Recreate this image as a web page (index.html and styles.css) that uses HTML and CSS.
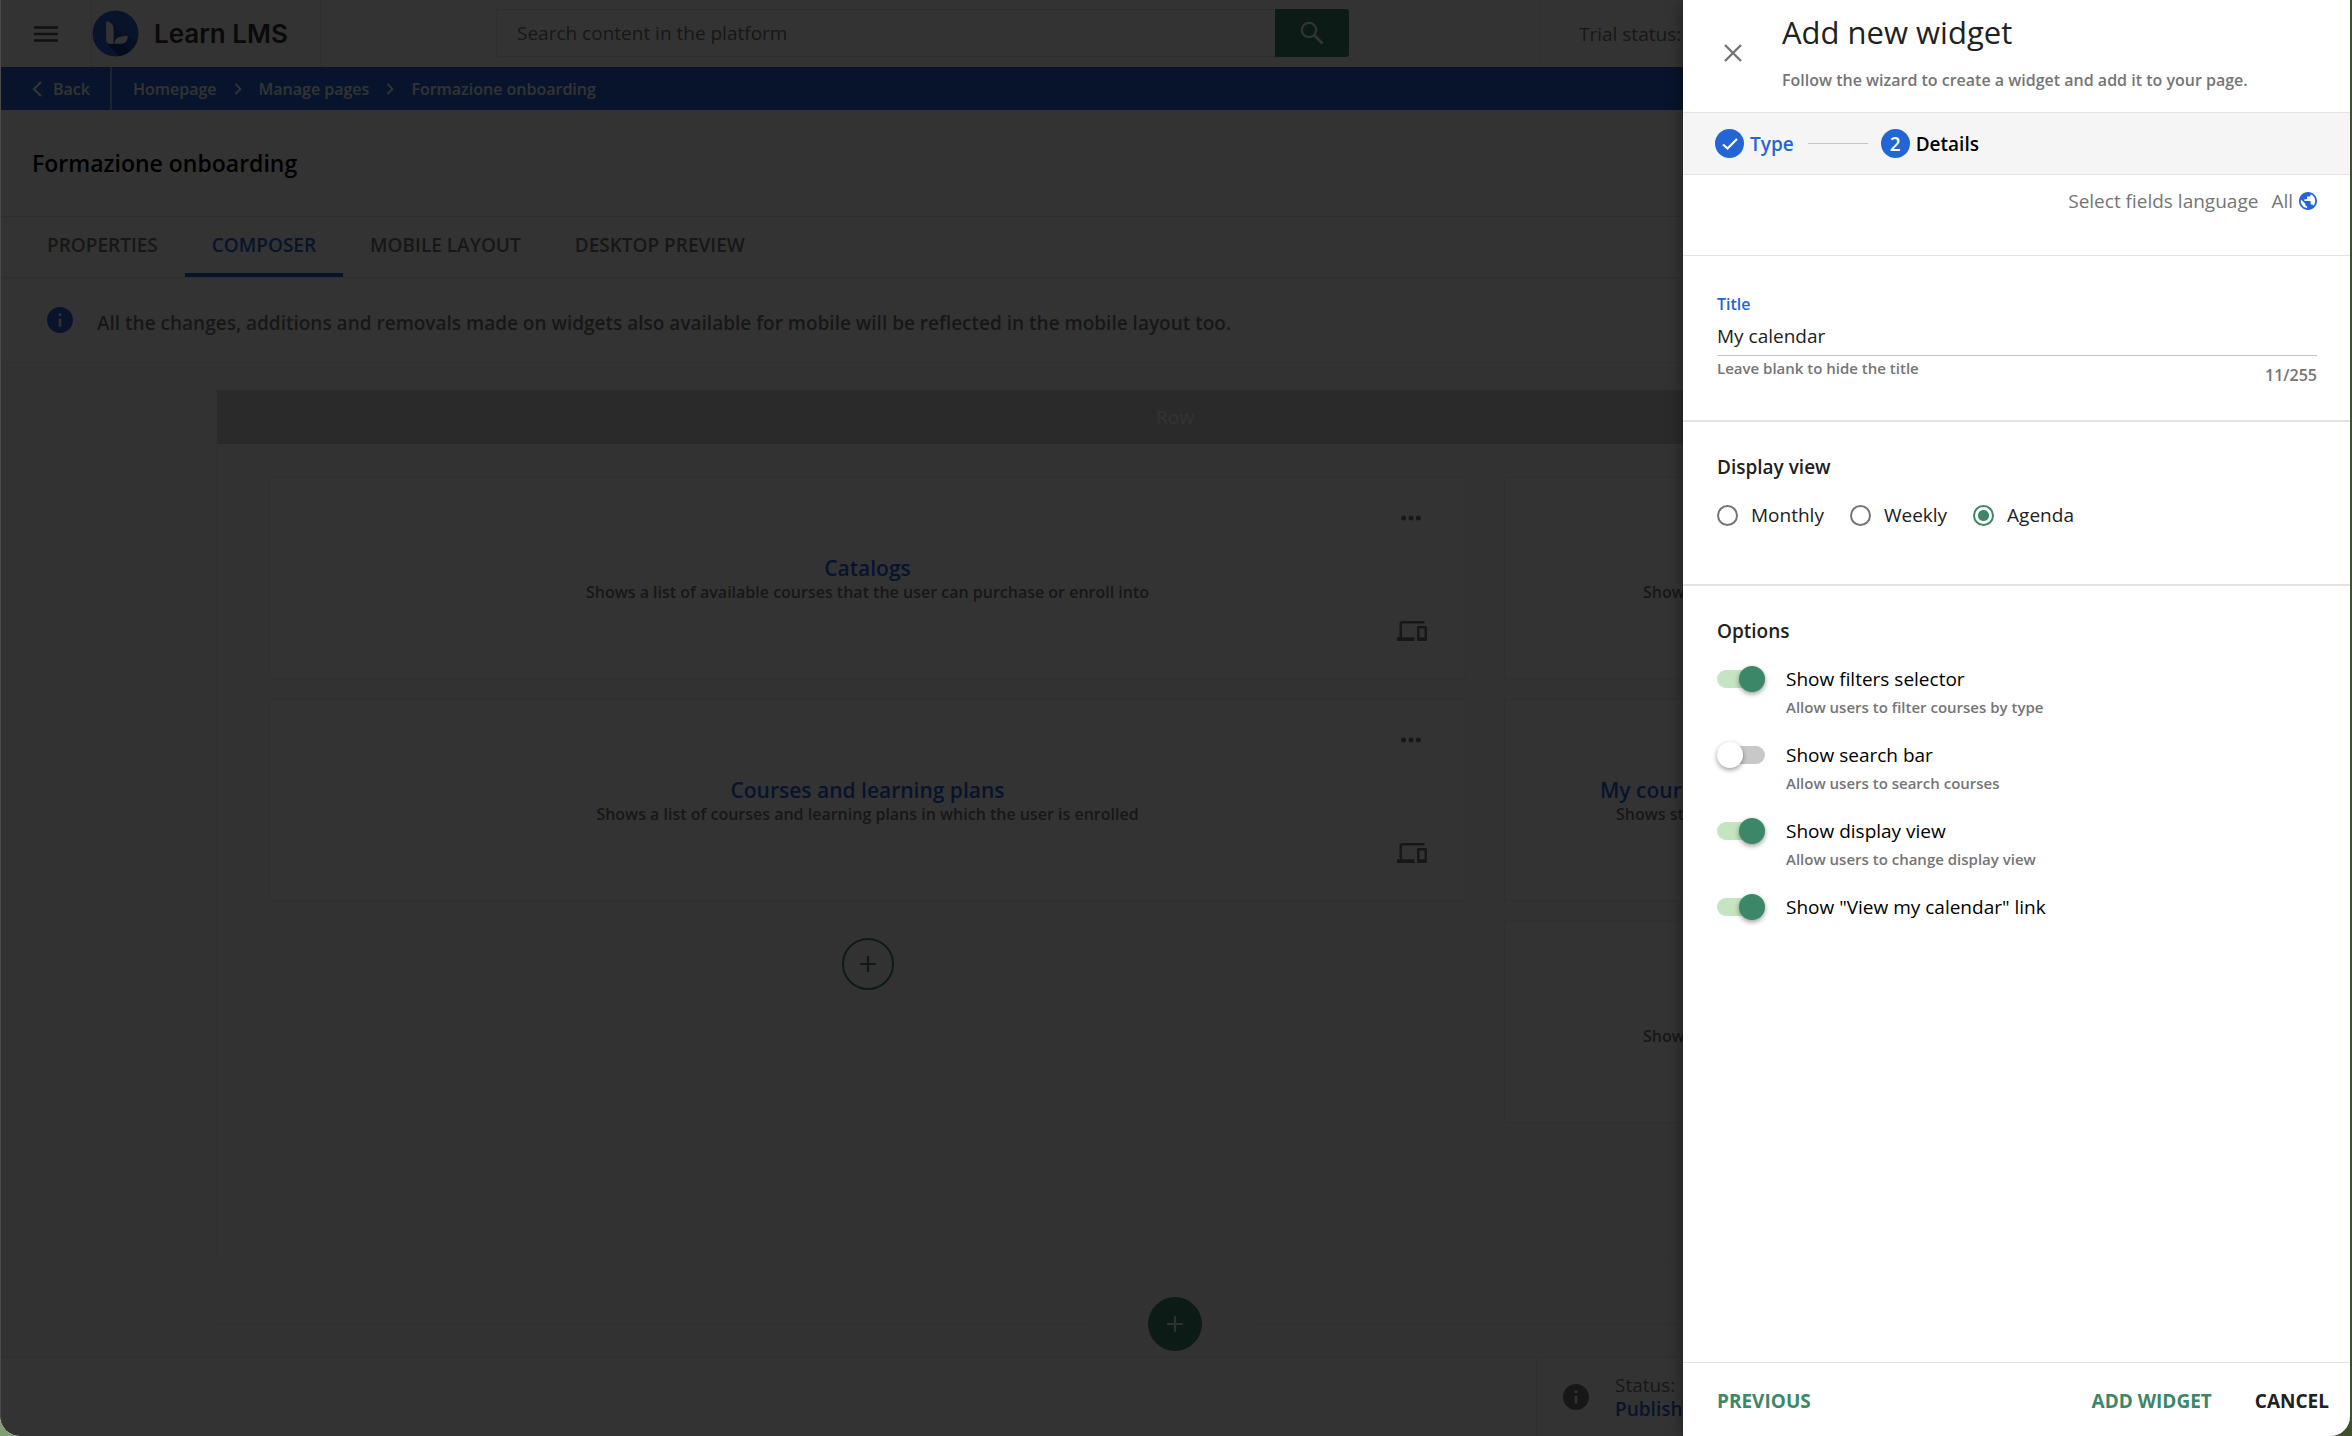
FILE: index.html
```html
<!DOCTYPE html>
<html lang="en">
<head>
<meta charset="utf-8">
<meta name="viewport" content="width=device-width, initial-scale=1">
<title>Learn LMS</title>
<link rel="stylesheet" href="styles.css">
</head>
<body>
<svg class="sprite" aria-hidden="true">
  <symbol id="plus" viewBox="0 0 24 24"><path d="M12 2.500v19M2.500 12h19" fill="none" stroke="currentColor" stroke-width="2.600"/></symbol>
  <symbol id="dots" viewBox="0 0 20 6"><circle cx="2.600" cy="3" r="2.500"/><circle cx="10" cy="3" r="2.500"/><circle cx="17.400" cy="3" r="2.500"/></symbol>
  <symbol id="devices" viewBox="0 4 24 16"><path d="M4 6h18V4H4c-1.100 0-2 .9-2 2v11H0v3h14v-3H4V6zm19 2h-6c-.55 0-1 .45-1 1v10c0 .55.45 1 1 1h6c.55 0 1-.45 1-1V9c0-.55-.45-1-1-1zm-1 9h-4v-7h4v7z"/></symbol>
  <symbol id="info" viewBox="2 2 20 20"><path d="M12 2C6.480 2 2 6.480 2 12s4.480 10 10 10 10-4.480 10-10S17.520 2 12 2zm1 15h-2v-6h2v6zm0-8h-2V7h2v2z"/></symbol>
  <symbol id="crumb" viewBox="0 0 8 12"><path d="M1.500 1l5 5-5 5" fill="none" stroke="currentColor" stroke-width="1.800"/></symbol>
</svg>
<div class="window">
  <div class="page">
    <header class="topbar">
      <button class="menu" aria-label="Menu"><svg viewBox="0 0 24 16"><path d="M0 1.500h24M0 8h24M0 14.500h24" stroke="currentColor" stroke-width="2.600"/></svg></button>
      <a class="brand" href="#">
        <svg viewBox="0 0 48 48" aria-hidden="true"><circle cx="24" cy="24" r="23.500" fill="#2465d5"/><path d="M22 14l10 13 4-.5 10 6A23.500 23.500 0 0 1 28 47L14.500 33z" fill="#1b52b4"/><path d="M15.500 34.500L28 47a23.500 23.500 0 0 0 11-6L28 34.500z" fill="#123c8c"/><path d="M14.500 11.500c4.500.5 7.500 3.500 7.500 8V34.500h-4a3.500 3.500 0 0 1-3.500-3.500z" fill="#fff"/><path d="M23 34.500c0-5.500 4-8 13.500-8-.3 5.500-2.500 8-8 8z" fill="#fff"/></svg>
        <span>Learn LMS</span>
      </a>
      <form class="search">
        <input type="search" aria-label="Search" placeholder="Search content in the platform">
        <button type="button" aria-label="Search"><svg viewBox="0 0 24 24"><circle cx="9" cy="9" r="7.200" fill="none" stroke="currentColor" stroke-width="2.200"/><path d="M14 14l8.500 8.500" stroke="currentColor" stroke-width="2.800"/></svg></button>
      </form>
      <div class="trial">Trial status:</div>
    </header>
    <nav class="crumbs" aria-label="Breadcrumb">
      <a class="back" href="#"><svg viewBox="0 0 10 16"><path d="M9 1L2 8l7 7" fill="none" stroke="currentColor" stroke-width="2.200"/></svg>Back</a>
      <a href="#">Homepage</a><svg><use href="#crumb"/></svg>
      <a href="#">Manage pages</a><svg><use href="#crumb"/></svg>
      <a href="#">Formazione onboarding</a>
    </nav>
    <div class="page-title"><h1>Formazione onboarding</h1></div>
    <nav class="tabs">
      <a href="#">PROPERTIES</a>
      <a class="active" href="#">COMPOSER</a>
      <a href="#">MOBILE LAYOUT</a>
      <a href="#">DESKTOP PREVIEW</a>
    </nav>
    <div class="notice"><svg><use href="#info"/></svg><p>All the changes, additions and removals made on widgets also available for mobile will be reflected in the mobile layout too.</p></div>
    <main class="composer">
      <section class="row">
        <div class="row-head">Row</div>
        <div class="cols">
          <div class="col">
            <article class="card">
              <button class="more" aria-label="More"><svg><use href="#dots"/></svg></button>
              <h2>Catalogs</h2>
              <p>Shows a list of available courses that the user can purchase or enroll into</p>
              <svg class="devices"><use href="#devices"/></svg>
            </article>
            <article class="card">
              <button class="more" aria-label="More"><svg><use href="#dots"/></svg></button>
              <h2>Courses and learning plans</h2>
              <p>Shows a list of courses and learning plans in which the user is enrolled</p>
              <svg class="devices"><use href="#devices"/></svg>
            </article>
            <div class="adder"><button class="add" aria-label="Add widget"><svg><use href="#plus"/></svg></button></div>
          </div>
          <div class="col">
            <article class="card short">
              <h2></h2>
              <p>Shows</p>
            </article>
            <article class="card long">
              <h2>My cour</h2>
              <p>Shows st</p>
            </article>
            <article class="card short">
              <h2></h2>
              <p>Shows</p>
            </article>
          </div>
        </div>
      </section>
      <div class="adder adder-row"><button class="add solid" aria-label="Add row"><svg><use href="#plus"/></svg></button></div>
    </main>
    <footer class="status">
      <div class="status-box"><svg><use href="#info"/></svg><p>Status:<br><a href="#">Publish</a></p></div>
    </footer>
  </div>
  <div class="scrim"></div>
  <aside class="drawer" role="dialog" aria-labelledby="drawer-title">
    <header class="drawer-head">
      <button class="close" aria-label="Close"><svg viewBox="0 0 18 18"><path d="M1 1l16 16M17 1L1 17" stroke="currentColor" stroke-width="2.400"/></svg></button>
      <div><h2 id="drawer-title">Add new widget</h2><p>Follow the wizard to create a widget and add it to your page.</p></div>
    </header>
    <ol class="steps">
      <li class="done"><span class="dot"><svg viewBox="0 0 16 12"><path d="M1 6.500l4.500 4L15 1" fill="none" stroke="currentColor" stroke-width="2.200"/></svg></span>Type</li>
      <li><span class="dot">2</span>Details</li>
    </ol>
    <div class="language">
      <span>Select fields language</span>
      <button><span>All</span><svg viewBox="2 2 20 20"><path d="M12 2C6.480 2 2 6.480 2 12s4.480 10 10 10 10-4.480 10-10S17.520 2 12 2zm-1 17.930c-3.950-.49-7-3.850-7-7.930 0-.62.080-1.210.21-1.790L9 15v1c0 1.100.9 2 2 2v1.930zm6.900-2.540c-.26-.81-1-1.390-1.900-1.390h-1v-3c0-.55-.45-1-1-1H8v-2h2c.55 0 1-.45 1-1V7h2c1.100 0 2-.9 2-2v-.41c2.930 1.190 5 4.060 5 7.410 0 2.080-.8 3.970-2.100 5.390z"/></svg></button>
    </div>
    <form class="drawer-body">
      <section class="field">
        <label for="title">Title</label>
        <input id="title" type="text" value="My calendar">
        <div class="field-foot"><small>Leave blank to hide the title</small><span>11/255</span></div>
      </section>
      <section class="group view">
        <h3>Display view</h3>
        <div class="radios">
          <label><input type="radio" name="view">Monthly</label>
          <label><input type="radio" name="view">Weekly</label>
          <label><input type="radio" name="view" checked>Agenda</label>
        </div>
      </section>
      <section class="group options">
        <h3>Options</h3>
        <label class="switch"><input type="checkbox" checked><span>Show filters selector</span><small>Allow users to filter courses by type</small></label>
        <label class="switch"><input type="checkbox"><span>Show search bar</span><small>Allow users to search courses</small></label>
        <label class="switch"><input type="checkbox" checked><span>Show display view</span><small>Allow users to change display view</small></label>
        <label class="switch"><input type="checkbox" checked><span>Show "View my calendar" link</span></label>
      </section>
    </form>
    <footer class="actions">
      <button class="primary">PREVIOUS</button>
      <button class="primary push">ADD WIDGET</button>
      <button>CANCEL</button>
    </footer>
  </aside>
</div>
</body>
</html>
```

FILE: styles.css
```css
:root {
  --blue: #2465d5;
  --green: #3c8768;
  --grey: #757575;
  --ink: #212121;
  --line: #e3e3e3;
  --soft: #e9e9e9;
}
* { box-sizing: border-box; }
body {
  margin: 0;
  background: linear-gradient(to right, #809f72 50%, #40502f 50%);
  font: 400 19px/24px "Open Sans", "Noto Sans", sans-serif;
  color: var(--ink);
}
h1, h2, h3, p, ol { margin: 0; padding: 0; font-weight: inherit; font-size: inherit; }
a { color: inherit; text-decoration: none; }
button { border: 0; padding: 0; background: none; font: inherit; color: inherit; cursor: pointer; }
svg { display: block; flex: none; fill: currentColor; }
.sprite { display: none; }

.window {
  position: relative;
  min-height: 100vh;
  margin-right: 2px;
  overflow: hidden;
  border-radius: 0 0 20px 20px;
}
.page { display: flex; flex-direction: column; min-height: 100vh; background: #fafafa; }

.topbar { display: flex; height: 67px; background: #fff; }
.menu { padding: 0 33px 0 34px; color: #555; }
.menu svg { width: 24px; height: 16px; }
.brand {
  display: flex; align-items: center; gap: 15px; width: 230px;
  border: solid var(--line); border-width: 0 1px;
  font: 600 26px/32px Inter, sans-serif; color: #333;
}
.brand svg { width: 47px; height: 47px; }
.search { display: flex; width: 853px; margin: 9px 0 10px 175px; }
.search input {
  flex: 1; min-width: 0; padding: 0 20px; border: 1px solid var(--line);
  border-right: 0; border-radius: 3px 0 0 3px; font: inherit; background: #fff;
}
.search input::placeholder { color: var(--grey); opacity: 1; }
.search button { display: grid; place-items: center; width: 74px; border-radius: 0 3px 3px 0; background: var(--green); color: #fff; }
.search svg { width: 24px; height: 24px; }
.trial { display: flex; align-items: center; margin-left: 191px; padding-left: 38px; border-left: 1px solid #f0f0f0; color: var(--grey); }

.crumbs { display: flex; align-items: center; gap: 17px; height: 43px; background: var(--blue); color: #fff; font: 600 16px/24px "Open Sans", sans-serif; }
.crumbs > svg { width: 8px; height: 12px; }
.back { display: flex; align-items: center; gap: 11px; height: 43px; margin-right: 4px; padding: 0 20px 0 32px; border-right: 2px solid #98b5e8; }
.back svg { width: 10px; height: 16px; }

.page-title { display: flex; align-items: center; height: 107px; padding: 0 32px; border-bottom: 1px solid var(--line); font: 600 23px/32px "Open Sans", sans-serif; color: #000; background: #fff; }
.tabs { display: flex; height: 61px; padding-left: 20px; border-bottom: 1px solid var(--line); background: #fff; color: var(--grey); font-weight: 600; }
.tabs a { padding: 16px 27px; border-bottom: 4px solid transparent; }
.tabs .active { border-color: var(--blue); color: var(--blue); }
.notice { display: flex; align-items: center; gap: 24px; height: 85px; padding: 0 47px; border-bottom: 1px solid #f0f0f0; background: #fff; color: var(--grey); font-weight: 600; }
.notice svg { width: 26px; height: 26px; color: var(--blue); }
.notice p { padding-top: 5px; }

.composer { display: flex; flex: 1; flex-direction: column; padding: 27px 216px 0; }
.row { flex: 1; border: 1px solid #f0f0f0; border-top: 0; }
.row-head { height: 54px; background: #cfcfcf; text-align: center; line-height: 54px; color: #fff; }
.cols { display: grid; grid-template-columns: 1197fr 577fr; gap: 38px; padding: 33px 52px; }
.col { display: flex; flex-direction: column; gap: 20px; min-width: 0; }
.card {
  display: flex; flex-direction: column; align-items: center; justify-content: center;
  position: relative; height: 202px; padding-top: 4px; border: 1px solid var(--soft); background: #fff;
  white-space: nowrap; font: 600 16px/24px "Open Sans", sans-serif; color: var(--grey);
}
.card h2 { min-height: 24px; font: 600 21px/24px "Open Sans", sans-serif; color: var(--blue); }
.short, .long { align-items: flex-start; }
.short { padding-left: 138px; }
.long { padding-left: 95px; }
.long p { padding-left: 16px; }
.more, .devices { position: absolute; right: 38px; }
.more { top: 37px; right: 44px; }
.more svg { width: 20px; height: 6px; }
.devices { top: 143px; width: 30px; height: 20px; }
.adder { display: flex; align-items: center; gap: 28px; padding-top: 17px; color: var(--green); }
.adder::before, .adder::after { content: ""; flex: 1; height: 1px; background: #f0f0f0; }
.add { display: grid; place-items: center; width: 52px; height: 52px; border: 2px solid; border-radius: 50%; }
.add svg { width: 20px; height: 20px; }
.adder-row { gap: 53px; padding: 33px 0 6px; }
.adder-row::before, .adder-row::after { background: var(--soft); }
.solid { width: 54px; height: 54px; border: 0; background: var(--green); color: #eee; }

.status { display: flex; height: 79px; border-top: 1px solid var(--line); background: #fff; color: var(--grey); }
.status-box { display: flex; align-items: center; gap: 26px; margin-left: auto; width: 814px; padding-left: 26px; border-left: 1px solid var(--line); }
.status-box svg { width: 26px; height: 26px; }
.status-box a { color: var(--blue); font-weight: 600; }

.scrim { position: absolute; inset: 0; background: rgba(0, 0, 0, .8); box-shadow: inset 1px 0 #4a4a4a; border-radius: 0 0 20px 20px; }

.drawer {
  position: absolute; inset: 0 0 0 auto; display: flex; flex-direction: column;
  width: 667px; max-width: 100%; background: #fff; box-shadow: 0 0 16px rgba(0, 0, 0, .4);
}
.drawer-head { display: flex; height: 113px; border-bottom: 1px solid var(--line); }
.drawer-head h2 { padding-top: 12px; font-size: 31px; line-height: 40px; }
.drawer-head p { padding-top: 16px; font: 600 16px/24px "Open Sans", sans-serif; color: var(--grey); }
.close { width: 18px; margin: 0 40px 6px 41px; color: var(--grey); }
.close svg { width: 18px; height: 18px; }
.steps { display: flex; align-items: center; height: 62px; padding-left: 32px; border-bottom: 1px solid var(--line); background: #f5f5f5; list-style: none; font-weight: 600; color: #000; }
.steps li { display: flex; align-items: center; gap: 6px; }
.steps .done { color: var(--blue); }
.done::after { content: ""; width: 60px; height: 1px; margin: 0 13px 0 8px; background: #c4c4c4; }
.dot { display: grid; place-items: center; width: 29px; height: 29px; border-radius: 50%; background: var(--blue); color: #fff; }
.dot svg { width: 16px; height: 12px; }
.language { display: flex; gap: 13px; height: 81px; padding: 14px 33px 0 0; justify-content: flex-end; border-bottom: 1px solid var(--line); color: var(--grey); }
.language button { display: flex; align-items: center; gap: 6px; height: 24px; }
.language svg { width: 18px; height: 18px; color: var(--blue); }

.field { display: flex; flex-direction: column; padding: 36px 33px 32px 34px; }
.field label { font: 600 16px/24px "Open Sans", sans-serif; color: var(--blue); }
.field input { height: 40px; padding: 0; border: 0; border-bottom: 1px solid #c4c4c4; font: inherit; color: inherit; }
.field-foot { display: flex; justify-content: space-between; color: var(--grey); font: 600 16px/24px "Open Sans", sans-serif; height: 32px; }
small { font: 600 15px/24px "Open Sans", sans-serif; color: var(--grey); }
.field-foot span { padding-top: 7px; }
.group { padding: 33px 34px 0; border-top: 2px solid var(--line); }
h3 { font-weight: 600; }
.view { height: 164px; }
.radios { display: flex; gap: 26px; padding-top: 24px; }
.radios label { display: flex; align-items: center; gap: 13px; }
.radios input { appearance: none; width: 21px; height: 21px; margin: 0; border: 2px solid #757575; border-radius: 50%; }
.radios input:checked { border-color: var(--green); background: radial-gradient(circle, var(--green) 5px, transparent 6px); }
.switch { display: grid; grid-template-columns: 48px auto; column-gap: 21px; row-gap: 4px; height: 76px; align-content: start; color: #000; }
.options h3 { padding-bottom: 24px; }
.switch small { grid-column: 2; }
.switch input {
  appearance: none; display: flex; align-items: center; width: 48px; height: 18px; margin: 3px 0; border-radius: 9px; background: #c8c8c8;
}
.switch input::before { content: ""; width: 26px; height: 26px; flex: none; border-radius: 50%; background: #fff; box-shadow: 0 2px 5px rgba(0, 0, 0, .4); }
.switch input:checked { justify-content: flex-end; background: #c5e4c1; }
.switch input:checked::before { background: var(--green); }

.actions { display: flex; gap: 43px; height: 74px; margin-top: auto; padding: 2px 21px 0 34px; border-top: 1px solid var(--line); font-weight: 700; }
.actions .primary { color: var(--green); }
.push { margin-left: auto; }
```
